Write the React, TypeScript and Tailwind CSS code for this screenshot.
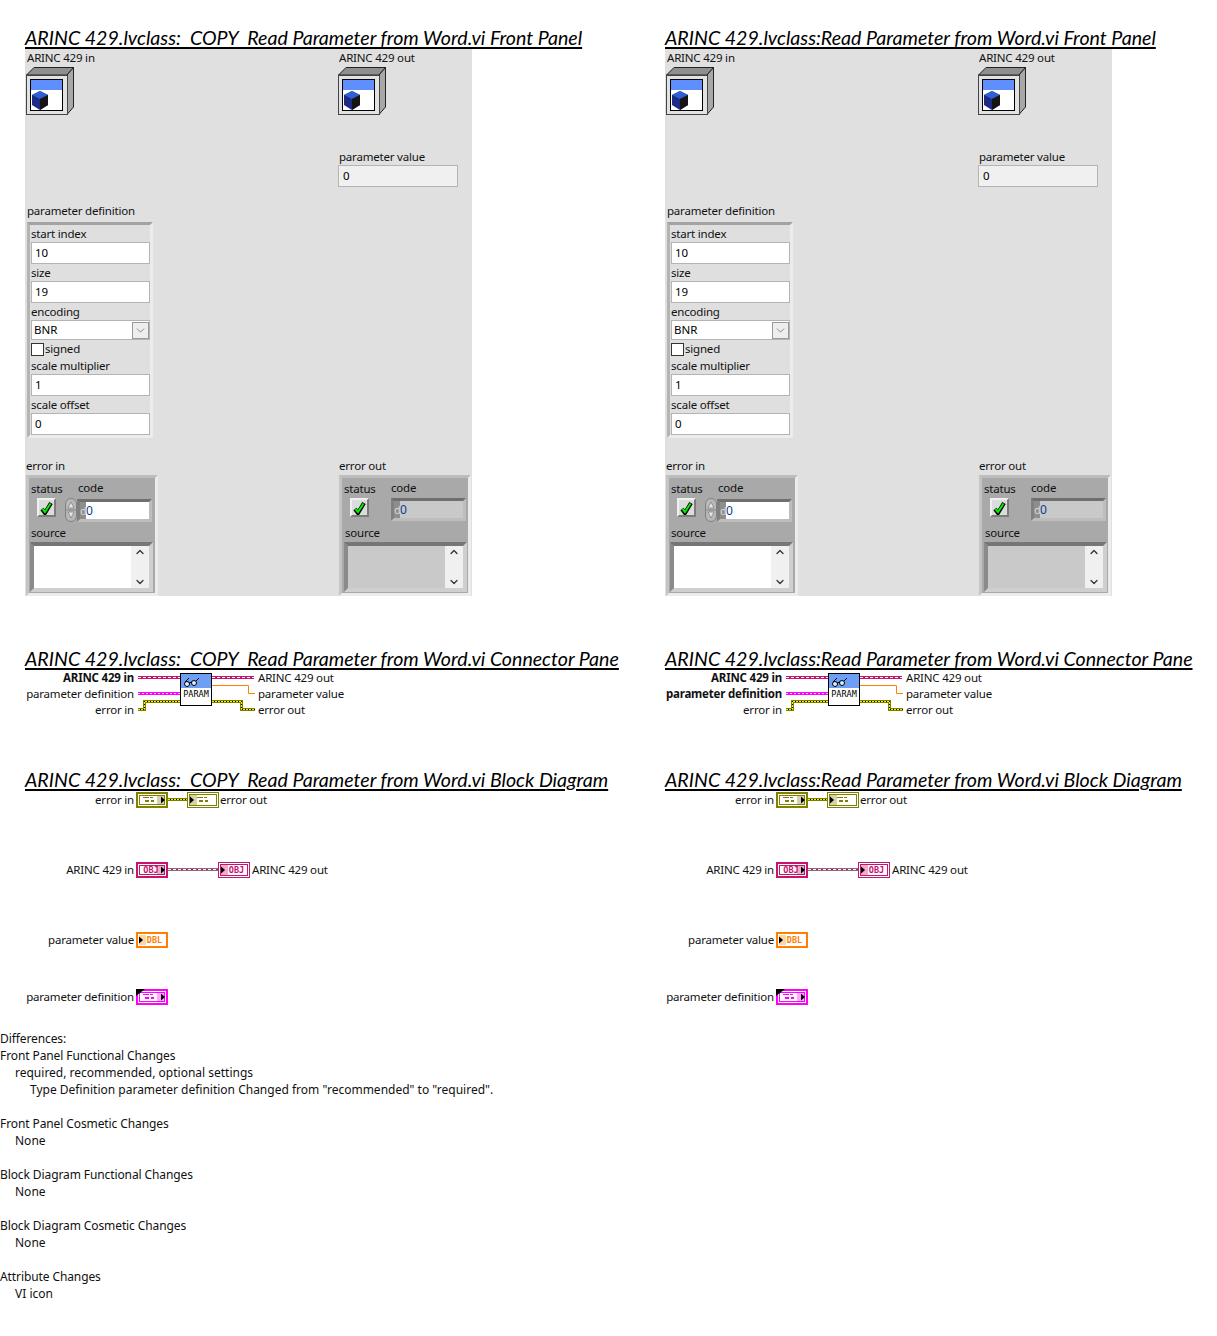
import React from "react";
import { ChevronDown, ChevronUp } from "lucide-react";

const Heading: React.FC<{ text: string }> = ({ text }) => (
  <h2 className="h-[20px] whitespace-pre font-['Lato',sans-serif] text-[19.6px] leading-[19px] italic underline decoration-[1.5px] underline-offset-[2px] text-black">
    {text}
  </h2>
);

const Label: React.FC<{ text: string; className?: string }> = ({ text, className }) => (
  <div className={`h-[16px] whitespace-pre text-[11.5px] leading-[16px] tracking-[-0.2px] text-[#111] ${className ?? ""}`}>
    {text}
  </div>
);

const ClassIcon = () => (
  <svg width="48" height="48" viewBox="0 0 48 48" className="block shrink-0">
    <polygon points="0.5,8 8,0.5 47.5,0.5 41,8" fill="#8f8f8f" stroke="#222" />
    <polygon points="41,8 47.5,0.5 47.5,40 41,47.5" fill="#a8a8a8" stroke="#222" />
    <rect x="0.5" y="8.5" width="41" height="39" fill="#e2e2e2" stroke="#444" />
    <rect x="4.5" y="12.5" width="32" height="31" fill="#fff" stroke="#000" />
    <rect x="5" y="13" width="31" height="10" fill="#5f8fff" />
    <polygon points="14,24 22,28 22,38 14,43 6,38 6,28" fill="#1d2b86" />
    <polygon points="14,24 22,28 14,32 6,28" fill="#2f5fd0" />
    <polygon points="14,32 22,28 22,38 14,43" fill="#151515" />
  </svg>
);

const Field: React.FC<{ value: string; className?: string }> = ({ value, className }) => (
  <div className={`h-[22px] border border-[#b4b4b4] pl-[3px] text-[11.5px] leading-[20px] text-black ${className ?? "bg-white"}`}>
    {value}
  </div>
);

const ParamCluster = () => (
  <div className="ml-[2px] flex h-[216px] w-[126px] flex-col border-[3px] border-t-[#a2a2a2] border-l-[#b4b4b4] border-r-[#ececec] border-b-[#ececec] bg-[#dfdfdf] pl-[1px]">
    <Label text="start index" className="mt-[1px]" />
    <Field value="10" />
    <Label text="size" className="mt-[1px]" />
    <Field value="19" />
    <Label text="encoding" className="mt-[1px]" />
    <div className="flex h-[21px] items-center border border-[#b4b4b4] bg-white pl-[2px] text-[11.5px] text-black">
      <span className="flex-1">BNR</span>
      <span className="flex h-[17px] w-[17px] items-center justify-center border border-[#9a9a9a] bg-[#eeeeee]">
        <ChevronDown size={13} strokeWidth={1.25} color="#555" />
      </span>
    </div>
    <div className="mt-[2px] flex h-[14px] items-center">
      <span className="h-[13px] w-[13px] border border-[#333] bg-white" />
      <span className="ml-[1px] text-[11.5px] leading-[14px] tracking-[-0.2px] text-[#111]">signed</span>
    </div>
    <Label text="scale multiplier" className="mt-[2px]" />
    <Field value="1" />
    <Label text="scale offset" className="mt-[1px]" />
    <Field value="0" />
  </div>
);

const StatusButton = () => (
  <div className="flex h-[19px] w-[19px] items-center justify-center border-2 border-t-[#f0f0f0] border-l-[#f0f0f0] border-r-[#7c7c7c] border-b-[#7c7c7c] bg-[#dcdcdc]">
    <svg width="13" height="14" viewBox="0 0 13 14">
      <path d="M2 8 L5 12 L11 2" fill="none" stroke="#000" strokeWidth="4" />
      <path d="M2.5 8 L5 11 L10.5 2.5" fill="none" stroke="#00f000" strokeWidth="2" />
    </svg>
  </div>
);

const Spinner = () => (
  <svg width="12" height="24" viewBox="0 0 12 24" className="block shrink-0">
    <rect x="0.5" y="0.5" width="11" height="23" rx="5.5" fill="#b8b8b8" stroke="#808080" />
    <path d="M6 4 L9 10 H3 Z M3 14 H9 L6 20 Z" fill="#e4e4e4" stroke="#707070" strokeWidth="0.6" />
    <path d="M1 12 H11" stroke="#808080" />
  </svg>
);

const ErrorCluster: React.FC<{ indicator?: boolean }> = ({ indicator }) => {
  const well = indicator ? "bg-[#c9c9c9]" : "bg-white";
  return (
    <div className="flex h-[121px] w-[132px] flex-col border-[3px] border-t-[#bdbdbd] border-l-[#c4c4c4] border-r-[#ececec] border-b-[#ececec] bg-[#a9a9a9] pl-[1px]">
      <div className="flex h-[43px]">
        <div className={indicator ? "w-[48px] pl-[1px]" : "w-[35px] pl-[1px]"}>
          <Label text="status" className="mt-[3px]" />
          <div className="ml-[6px] mt-[1px]">
            <StatusButton />
          </div>
        </div>
        <div className="flex flex-col">
          <Label text="code" className={indicator ? "mt-[2px]" : "ml-[13px] mt-[2px]"} />
          <div className="mt-[2px] flex items-center">
            {!indicator && <Spinner />}
            <div className="flex h-[23px] w-[75px] border-[3px] border-t-[#6f6f6f] border-l-[#808080] border-r-[#bdbdbd] border-b-[#bdbdbd] bg-[#8e8e8e]">
              <span className="w-[6px] text-center text-[11px] leading-[17px] text-[#d8d8d8]">d</span>
              <span className={`flex-1 text-[12px] leading-[17px] text-[#0b3d91] ${well}`}>0</span>
            </div>
          </div>
        </div>
      </div>
      <Label text="source" className={indicator ? "ml-[2px] mt-[4px]" : "ml-[1px] mt-[4px]"} />
      <div className={`mt-[1px] flex h-[50px] w-[123px] border-[4px] border-t-[#767676] border-l-[#8a8a8a] border-r-[#cfcfcf] border-b-[#cfcfcf] ${indicator ? "ml-[1px]" : ""}`}>
        <div className={`flex-1 ${well}`} />
        <div className="flex w-[18px] flex-col items-center justify-between bg-[#f0f0f0]">
          <ChevronUp size={12} strokeWidth={2.5} color="#333" />
          <ChevronDown size={12} strokeWidth={2.5} color="#333" />
        </div>
      </div>
    </div>
  );
};

const FrontPanel = () => (
  <div className="flex h-[548px] w-[447px] bg-[#e0e0e0]">
    <div className="w-[313px]">
      <Label text="ARINC 429 in" className="ml-[2px] mt-[2px]" />
      <div className="ml-[1px] mt-[1px]">
        <ClassIcon />
      </div>
      <Label text="parameter definition" className="ml-[2px] mt-[88px]" />
      <div className="mt-[3px]">
        <ParamCluster />
      </div>
      <Label text="error in" className="ml-[1px] mt-[20px]" />
      <div className="ml-[1px] mt-[1px]">
        <ErrorCluster />
      </div>
    </div>
    <div className="w-[134px]">
      <Label text="ARINC 429 out" className="ml-[1px] mt-[2px]" />
      <div className="mt-[1px]">
        <ClassIcon />
      </div>
      <Label text="parameter value" className="ml-[1px] mt-[34px]" />
      <Field value="0" className="w-[120px] bg-[#f0f0f0] indent-[1px]" />
      <div className="h-[271px]" />
      <Label text="error out" className="ml-[1px]" />
      <div className="ml-[1px] mt-[1px]">
        <ErrorCluster indicator />
      </div>
    </div>
  </div>
);

const ClassWire: React.FC<{ x1: number; x2: number; y: number; edge?: string }> = ({ x1, x2, y, edge = "#c4146e" }) => (
  <>
    <line x1={x1} x2={x2} y1={y} y2={y} stroke={edge} strokeWidth="3" />
    <line x1={x1} x2={x2} y1={y} y2={y} stroke="#c4146e" strokeWidth="1" />
    <line x1={x1} x2={x2} y1={y} y2={y} stroke="#ffffff" strokeWidth="1" strokeDasharray="3 2" />
  </>
);

const ErrorWire: React.FC<{ d: string }> = ({ d }) => (
  <>
    <path d={d} fill="none" stroke="#7f7f00" strokeWidth="3" />
    <path d={d} fill="none" stroke="#000" strokeWidth="1" />
    <path d={d} fill="none" stroke="#f5f500" strokeWidth="1" strokeDasharray="2 1" />
  </>
);

const ConnectorGraphic = () => (
  <svg width="120" height="46" viewBox="0 0 120 46" className="block shrink-0">
    <ClassWire x1={2} x2={44} y={7.5} />
    <ClassWire x1={76} x2={118} y={7.5} />
    <line x1="2" x2="44" y1="23.5" y2="23.5" stroke="#ff00ff" strokeWidth="3" />
    <line x1="2" x2="44" y1="23.5" y2="23.5" stroke="#ffd0ff" strokeWidth="1" strokeDasharray="2 2" />
    <ErrorWire d="M2 39.5 H8.5 V31.5 H44" />
    <ErrorWire d="M76 31.5 H105.5 V39.5 H119" />
    <path d="M76 15.5 H112.5 V23.5 H119" fill="none" stroke="#ff8000" strokeWidth="1" />
    <rect x="44.5" y="3.5" width="31" height="32" fill="#fff" stroke="#000" />
    <rect x="45" y="4" width="30" height="14" fill="#6f9ff5" />
    <circle cx="51" cy="14" r="2.5" fill="#d9f0ff" stroke="#000" />
    <circle cx="58" cy="13" r="2.5" fill="#d9f0ff" stroke="#000" />
    <path d="M53 13 L56 12 M60 11 L63 8 M49 12 L53 8" fill="none" stroke="#000" />
    <text
      x="60"
      y="27"
      textAnchor="middle"
      fontFamily="'DejaVu Sans Mono', monospace"
      fontSize="8.5"
      fill="#000"
    >
      PARAM
    </text>
  </svg>
);

const ConnectorPane: React.FC<{ boldDefinition?: boolean; labelWidth: number }> = ({
  boldDefinition,
  labelWidth,
}) => (
  <div className="mt-[1px] flex h-[46px]">
    <div className="flex flex-col items-end pr-[2px]" style={{ width: labelWidth }}>
      <Label text="ARINC 429 in" className="font-bold" />
      <Label text="parameter definition" className={boldDefinition ? "font-bold" : ""} />
      <Label text="error in" />
    </div>
    <ConnectorGraphic />
    <div className="pl-[2px]">
      <Label text="ARINC 429 out" />
      <Label text="parameter value" />
      <Label text="error out" />
    </div>
  </div>
);

type Kind = "error" | "class" | "dbl" | "def";

const kindColor: Record<Kind, string> = {
  error: "#808000",
  class: "#c4146e",
  dbl: "#ff8000",
  def: "#ff00ff",
};

// control = thick border with arrow on the right, indicator = thin border with arrow on the left
const Terminal: React.FC<{ kind: Kind; indicator?: boolean }> = ({ kind, indicator }) => {
  const c = kindColor[kind];
  const sw = kind === "dbl" || !indicator ? 2 : 1;
  const inset = sw / 2;
  const glyphX = indicator ? 10 : 7;
  const clusterGlyph = kind === "error" || kind === "def";
  const label = kind === "class" ? "OBJ" : kind === "dbl" ? "DBL" : "";
  const arrowX = indicator ? 3 : 25;
  return (
    <svg width="32" height="16" viewBox="0 0 32 16" className="block shrink-0">
      <rect x={inset} y={inset} width={32 - sw} height={16 - sw} fill="#fff" stroke={c} strokeWidth={sw} />
      {kind !== "dbl" &&
        (sw === 2 ? (
          <rect x="3.5" y="3.5" width="25" height="9" fill="none" stroke={c} strokeWidth="1" />
        ) : (
          <rect x="2.5" y="2.5" width="27" height="11" fill="none" stroke={c} strokeWidth="1" />
        ))}
      <rect x={indicator ? 3 : 21} y="3" width="7" height="10" fill={c} opacity="0.35" />
      {clusterGlyph && (
        <path
          d={`M${glyphX} 5h6v1h-6z M${glyphX + 7} 5h3v1h-3z M${glyphX + 2} 8h4v2h-4z M${glyphX + 8} 8h3v2h-3z`}
          fill={c}
        />
      )}
      {label && (
        <text
          x={indicator ? 18.5 : 15}
          y="11"
          textAnchor="middle"
          fontFamily="'DejaVu Sans Mono', monospace"
          fontSize="8.5"
          fontWeight="700"
          fill={c}
        >
          {label}
        </text>
      )}
      <path d={`M${arrowX} 4.5 L${arrowX + 4} 8 L${arrowX} 11.5 Z`} fill="#000" />
      {kind === "def" && <path d="M0 0 H9 L0 7 Z" fill="#000" />}
    </svg>
  );
};

const BdWire: React.FC<{ kind: "error" | "class"; width: number }> = ({ kind, width }) => (
  <svg width={width} height="16" viewBox={`0 0 ${width} 16`} className="block shrink-0">
    {kind === "error" ? (
      <ErrorWire d={`M0 7.5 H${width}`} />
    ) : (
      <ClassWire x1={0} x2={width} y={7.5} edge="#8a6a7c" />
    )}
  </svg>
);

const BlockDiagram = () => (
  <div className="mt-[2px] flex flex-col">
    <div className="flex h-[16px] items-center">
      <Label text="error in" className="w-[111px] pr-[2px] text-right" />
      <Terminal kind="error" />
      <BdWire kind="error" width={19} />
      <Terminal kind="error" indicator />
      <Label text="error out" className="pl-[1px]" />
    </div>
    <div className="mt-[54px] flex h-[16px] items-center">
      <Label text="ARINC 429 in" className="w-[111px] pr-[2px] text-right" />
      <Terminal kind="class" />
      <BdWire kind="class" width={50} />
      <Terminal kind="class" indicator />
      <Label text="ARINC 429 out" className="pl-[2px]" />
    </div>
    <div className="mt-[54px] flex h-[16px] items-center">
      <Label text="parameter value" className="w-[111px] pr-[2px] text-right" />
      <Terminal kind="dbl" indicator />
    </div>
    <div className="mt-[41px] flex h-[16px] items-center">
      <Label text="parameter definition" className="w-[111px] pr-[2px] text-right" />
      <Terminal kind="def" />
    </div>
  </div>
);

const Column: React.FC<{ title: string; boldDefinition?: boolean; labelWidth: number; width: string }> = ({
  title,
  boldDefinition,
  labelWidth,
  width,
}) => (
  <div className={`shrink-0 pl-[25px] pt-[28px] ${width}`}>
    <Heading text={`${title} Front Panel`} />
    <FrontPanel />
    <div className="mt-[53px]">
      <Heading text={`${title} Connector Pane`} />
    </div>
    <ConnectorPane boldDefinition={boldDefinition} labelWidth={labelWidth} />
    <div className="mt-[54px]">
      <Heading text={`${title} Block Diagram`} />
    </div>
    <BlockDiagram />
  </div>
);

const diffLines: [string, number][] = [
  ["Differences:", 0],
  ["Front Panel Functional Changes", 0],
  ["required, recommended, optional settings", 15],
  ['Type Definition parameter definition Changed from "recommended" to "required".', 30],
  ["", 0],
  ["Front Panel Cosmetic Changes", 0],
  ["None", 15],
  ["", 0],
  ["Block Diagram Functional Changes", 0],
  ["None", 15],
  ["", 0],
  ["Block Diagram Cosmetic Changes", 0],
  ["None", 15],
  ["", 0],
  ["Attribute Changes", 0],
  ["VI icon", 15],
];

export default function App() {
  return (
    <div className="h-[1336px] w-[1217px] overflow-hidden bg-white font-['Noto_Sans',sans-serif]">
      <div className="flex">
        <Column title="ARINC 429.lvclass:  COPY  Read Parameter from Word.vi" labelWidth={111} width="w-[640px]" />
        <Column title="ARINC 429.lvclass:Read Parameter from Word.vi" boldDefinition labelWidth={119} width="w-[577px]" />
      </div>
      <div className="mt-[25px]">
        {diffLines.map(([text, indent], i) => (
          <div
            key={i}
            className={`h-[17px] whitespace-pre text-[12px] leading-[17px] text-[#111] ${indent === 0 ? "tracking-[-0.1px]" : ""}`}
            style={{ paddingLeft: indent }}
          >
            {text}
          </div>
        ))}
      </div>
    </div>
  );
}
